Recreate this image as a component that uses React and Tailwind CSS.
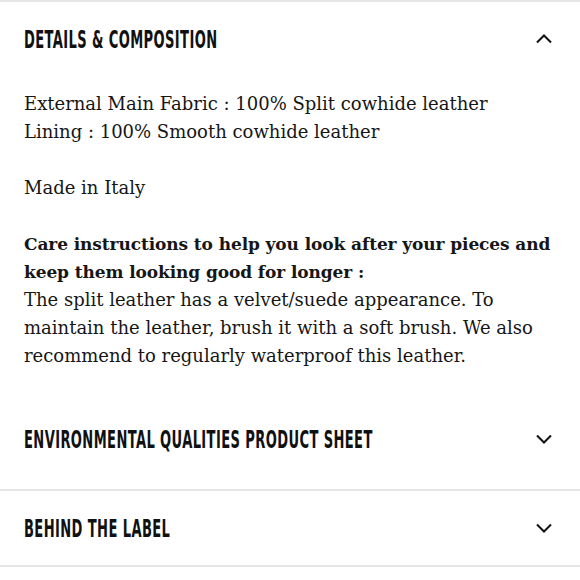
import { useState } from 'react'

const SECTIONS = [
  { id: 'details', title: 'DETAILS & COMPOSITION' },
  { id: 'env', title: 'ENVIRONMENTAL QUALITIES PRODUCT SHEET' },
  { id: 'label', title: 'BEHIND THE LABEL' },
]

const HEADING_FONT = "font-['DejaVu_Sans_Condensed','Liberation_Sans_Narrow',sans-serif]"
const BODY_FONT = "font-['DejaVu_Serif','Liberation_Serif',serif]"

function Chevron({ open }) {
  return (
    <svg width="16" height="10" viewBox="0 0 16 10" fill="none" className="shrink-0" aria-hidden="true">
      <polyline
        points={open ? '1,8.5 8,1.5 15,8.5' : '1,1.5 8,8.5 15,1.5'}
        stroke="#111"
        strokeWidth="2"
      />
    </svg>
  )
}

function Details() {
  return (
    <div className={`px-6 pt-[14px] pb-[32px] text-[18px] leading-[28px] text-[#161616] ${BODY_FONT}`}>
      <p>
        External Main Fabric : 100% Split cowhide leather
        <br />
        Lining : 100% Smooth cowhide leather
      </p>
      <p className="mt-[28px]">Made in Italy</p>
      <p className="mt-[28px]">
        <strong className="font-bold text-[17px] tracking-[-0.1px]">
          Care instructions to help you look after your pieces and
          <br />
          keep them looking good for longer :
        </strong>
        <br />
        The split leather has a velvet/suede appearance. To
        <br />
        maintain the leather, brush it with a soft brush. We also
        <br />
        recommend to regularly waterproof this leather.
      </p>
    </div>
  )
}

export default function App() {
  const [open, setOpen] = useState('details')

  return (
    <div className="w-[580px] h-[580px] bg-white border-t-2 border-[#e6e6e6] overflow-hidden">
      {SECTIONS.map((s, i) => {
        const isOpen = open === s.id
        return (
          <div key={s.id} className={i > 0 ? 'border-b-2 border-[#e6e6e6]' : ''}>
            <button
              type="button"
              onClick={() => setOpen(isOpen ? null : s.id)}
              className="w-full h-[74px] flex items-center pl-6 pr-[28px] text-left"
            >
              <span className="flex-1 min-w-0">
                <span
                  className={`inline-block whitespace-nowrap origin-left scale-x-[0.66] scale-y-[1.12] text-[22px] font-bold tracking-[0.6px] text-[#111] ${HEADING_FONT}`}
                >
                  {s.title}
                </span>
              </span>
              <Chevron open={isOpen} />
            </button>
            {isOpen && s.id === 'details' && <Details />}
            {!isOpen && i === 1 && <div className="h-[13px]" />}
          </div>
        )
      })}
    </div>
  )
}
